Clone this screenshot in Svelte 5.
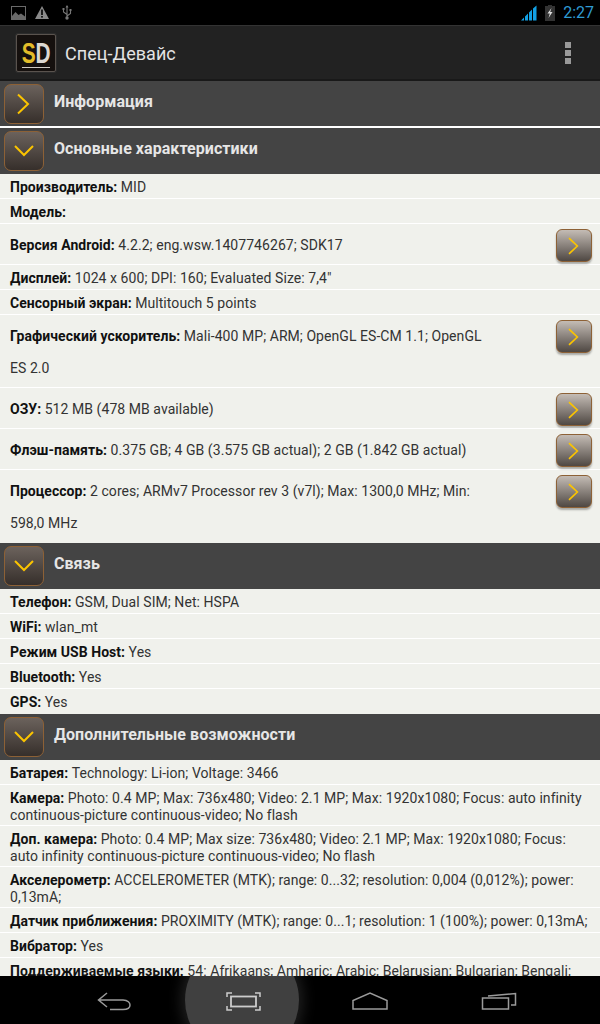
<script>
  const sections = [
    { title: 'Основные характеристики', rows: [
      { k: 'Производитель', v: 'MID' },
      { k: 'Модель', v: '' },
      { k: 'Версия Android', v: '4.2.2; eng.wsw.1407746267; SDK17', btn: true },
      { k: 'Дисплей', v: '1024 x 600; DPI: 160; Evaluated Size: 7,4"' },
      { k: 'Сенсорный экран', v: 'Multitouch 5 points' },
      { k: 'Графический ускоритель', v: 'Mali-400 MP; ARM; OpenGL ES-CM 1.1; OpenGL ES 2.0', btn: true },
      { k: 'ОЗУ', v: '512 MB (478 MB available)', btn: true },
      { k: 'Флэш-память', v: '0.375 GB; 4 GB (3.575 GB actual); 2 GB (1.842 GB actual)', btn: true },
      { k: 'Процессор', v: '2 cores; ARMv7 Processor rev 3 (v7l); Max: 1300,0 MHz; Min: 598,0 MHz', btn: true }
    ]},
    { title: 'Связь', rows: [
      { k: 'Телефон', v: 'GSM, Dual SIM; Net: HSPA' },
      { k: 'WiFi', v: 'wlan_mt' },
      { k: 'Режим USB Host', v: 'Yes' },
      { k: 'Bluetooth', v: 'Yes' },
      { k: 'GPS', v: 'Yes' }
    ]},
    { title: 'Дополнительные возможности', rows: [
      { k: 'Батарея', v: 'Technology: Li-ion; Voltage: 3466' },
      { k: 'Камера', v: 'Photo: 0.4 MP; Max: 736x480; Video: 2.1 MP; Max: 1920x1080; Focus: auto infinity continuous-picture continuous-video; No flash' },
      { k: 'Доп. камера', v: 'Photo: 0.4 MP; Max size: 736x480; Video: 2.1 MP; Max: 1920x1080; Focus: auto infinity continuous-picture continuous-video; No flash' },
      { k: 'Акселерометр', v: 'ACCELEROMETER (MTK); range: 0...32; resolution: 0,004 (0,012%); power: 0,13mA;' },
      { k: 'Датчик приближения', v: 'PROXIMITY (MTK); range: 0...1; resolution: 1 (100%); power: 0,13mA;' },
      { k: 'Вибратор', v: 'Yes' },
      { k: 'Поддерживаемые языки', v: '54: Afrikaans; Amharic; Arabic; Belarusian; Bulgarian; Bengali; Catalan' }
    ]}
  ];
</script>

{#snippet chevron(open)}
  <svg class="chev" viewBox="0 0 24 24" width="24" height="24" aria-hidden="true">
    {#if open}
      <path d="M3 7 L12 16 L21 7" fill="none" stroke="#fbc400" stroke-width="2" />
    {:else}
      <path d="M6 2.5 L16 12 L6 21.5" fill="none" stroke="#fbc400" stroke-width="2" />
    {/if}
  </svg>
{/snippet}

{#snippet header(title, open, short)}
  <div class="header" class:short>
    <div class="hbtn">{@render chevron(open)}</div>
    <span class="htitle">{title}</span>
  </div>
{/snippet}

<div class="screen">
  <div class="status">
    <div class="sleft">
      <svg width="15" height="14" viewBox="0 0 15 14"><rect x="0.5" y="0.5" width="14" height="13" fill="none" stroke="#6a6a6a" /><path d="M1 13 L1 10 L4.5 6 L7.5 9 L10 7.5 L14 10.5 L14 13 Z" fill="#6a6a6a" /></svg>
      <svg width="14" height="13" viewBox="0 0 14 13"><path d="M7 0 L14 13 L0 13 Z" fill="#8a8a8a" /><rect x="6.2" y="3.5" width="1.6" height="5.5" fill="#000" /><rect x="6.2" y="10" width="1.6" height="1.6" fill="#000" /></svg>
      <svg width="10" height="15" viewBox="0 0 10 15"><path d="M5 1 L5 13 M5 9.5 L1.5 7 L1.5 4.5 M5 11 L8.5 8.5 L8.5 5.5" fill="none" stroke="#777" stroke-width="1.1" /><path d="M5 0 L6.5 2.5 H3.5 Z" fill="#777" /><circle cx="5" cy="13" r="1.7" fill="#777" /><rect x="0.5" y="3" width="2" height="2" fill="#777" /><rect x="7.5" y="4" width="2" height="2" fill="#777" /></svg>
    </div>
    <div class="sright">
      <svg width="16" height="16" viewBox="0 0 16 16"><path d="M0 15.5 L3 12.5 L3 15.5 Z M4 11.5 L7 8.5 L7 15.5 L4 15.5 Z M8 7.5 L11 4.5 L11 15.5 L8 15.5 Z M12 3.5 L15.5 0.5 L15.5 15.5 L12 15.5 Z" fill="#12a0e4" /></svg>
      <svg width="10" height="16" viewBox="0 0 10 16"><path d="M3 0 H7 V1 H10 V16 H0 V1 H3 Z" fill="#333" /><path d="M6.5 3 L2.5 8.5 H4.8 L3.5 13 L7.5 7 H5.2 Z" fill="#ddd" /></svg>
      <span class="clock">2:27</span>
    </div>
  </div>

  <div class="actionbar">
    <div class="logo">
      <div class="letters"><span class="s">S</span><span class="d">D</span></div>
      <div class="uline"></div>
    </div>
    <span class="apptitle">Спец-Девайс</span>
    <div class="menu"><i></i><i></i><i></i></div>
  </div>

  <div class="content">
    {@render header('Информация', false, true)}
    <div class="sep"></div>
    {#each sections as sec}
      {@render header(sec.title, true, false)}
      <div class="rows">
        {#each sec.rows as r}
          <div class="row" class:withbtn={r.btn}>
            <div class="text"><b>{r.k}:</b>{r.v ? ' ' + r.v : ''}</div>
            {#if r.btn}
              <div class="rbtn">{@render chevron(false)}</div>
            {/if}
          </div>
        {/each}
      </div>
    {/each}
  </div>

  <div class="nav">
    <div class="glow"></div>
    <svg class="nicon back" width="36" height="22" viewBox="0 0 36 22"><path d="M10 3 L1.5 10 L10 17 M1.5 10 H26 C31 10 33 13 33 15 C33 18 31 19.5 26 19.5 H13" fill="none" stroke="#9a9a9a" stroke-width="1.5" /></svg>
    <svg class="nicon full" width="36" height="20" viewBox="0 0 36 20"><path d="M1 5 V1 H6 M29 1 H34 V5 M34 14 V18 H29 M6 18 H1 V14" fill="none" stroke="#ccc" stroke-width="1.5" /><rect x="5" y="4.5" width="25" height="10" fill="none" stroke="#ccc" stroke-width="1.8" /></svg>
    <svg class="nicon home" width="36" height="20" viewBox="0 0 36 20"><path d="M1 17 V8.5 L18 1 L35 8.5 V17 Z" fill="none" stroke="#9a9a9a" stroke-width="1.5" /></svg>
    <svg class="nicon recent" width="36" height="20" viewBox="0 0 36 20"><rect x="1.5" y="6" width="26" height="11" fill="none" stroke="#9a9a9a" stroke-width="1.5" /><path d="M7 4 L34.5 1.5 V13 H30" fill="none" stroke="#9a9a9a" stroke-width="1.5" /></svg>
  </div>
</div>

<style>
  :global(body) { margin: 0; background: #000; }
  .screen {
    width: 600px; height: 1024px; display: flex; flex-direction: column;
    overflow: hidden; font-family: Roboto, "Liberation Sans", sans-serif;
  }
  .status {
    height: 25px; flex: none; background: #000; display: flex;
    justify-content: space-between; align-items: center; padding: 0 6px 0 11px;
    box-sizing: border-box;
  }
  .sleft { display: flex; gap: 9px; align-items: center; }
  .sleft svg:nth-child(3) { margin-left: 4px; }
  .sright { display: flex; align-items: center; gap: 8px; }
  .clock { color: #2f9bd3; font-size: 16px; margin-left: 0; }
  .actionbar {
    height: 56px; box-sizing: border-box; flex: none; background: #222; border-top: 1px solid #333;
    border-bottom: 2px solid #191919; display: flex; align-items: center; padding: 1px 0 0 16px;
  }
  .logo {
    width: 40px; height: 38px; box-sizing: border-box; border: 1px solid #5a534e; border-radius: 2px;
    background: #15100e; display: flex; flex-direction: column; align-items: center;
    flex: none; padding-top: 7px; box-shadow: 0 0 0 1px #2c2c2c;
  }
  .letters {
    display: flex; font: bold 29px/22px "Liberation Sans", sans-serif;
    height: 22px; transform: scaleX(.72); white-space: nowrap;
  }
  .logo .s { color: #e2bc2a; }
  .logo .d { color: #dcd8d2; }
  .uline { width: 28px; height: 1px; background: #cfcac4; margin-top: 3px; }
  .apptitle { color: #e4e4e4; font-size: 18px; margin-left: 9px; flex: 1; letter-spacing: .05px; }
  .menu { display: flex; flex-direction: column; gap: 2px; margin-right: 29px; }
  .menu i { display: block; width: 6px; height: 6px; background: #999; }
  .content { flex: 1; min-height: 0; overflow: hidden; background: #f0f1ec; }
  .header {
    height: 46px; background: #444; display: flex; align-items: flex-start; padding: 3px 0 0 4px;
    box-sizing: border-box; flex: none;
  }
  .header.short { height: 45px; }
  .hbtn, .rbtn {
    box-sizing: border-box; display: flex; align-items: center; justify-content: center;
    border: 1px solid #8d6136;
  }
  .hbtn {
    width: 40px; height: 40px; border-radius: 7px; flex: none;
    background: linear-gradient(#6b625c, #362f2b);
  }
  .htitle { color: #e6e6e6; font-size: 16px; line-height: 36px; font-weight: 700; margin-left: 10px; letter-spacing: .05px; }
  .sep { height: 2px; background: #fff; }
  .rows { background: #f0f1ec; }
  .row {
    display: flex; align-items: flex-start; justify-content: space-between;
    border-bottom: 1px solid #fff; padding: 5px 8px 2px 10px; min-height: 17px;
    font-size: 14px; line-height: 16.5px; color: #333; letter-spacing: .06px;
  }
  .row:last-child { border-bottom-color: transparent; }
  .row b { color: #111; font-weight: 700; letter-spacing: .04px; }
  .row.withbtn { padding: 5px 8px 3px 10px; min-height: 32px; }
  .row.withbtn .text { line-height: 32px; width: 490px; }
  .rbtn {
    width: 36px; height: 33px; border-radius: 6px; flex: none; margin-bottom: -1px;
    background: linear-gradient(#c4bcb5, #4f4843);
    box-shadow: 0 2px 2px rgba(0,0,0,.3);
  }
  .chev { display: block; }
  .rbtn .chev { width: 20px; height: 20px; }
  .nav {
    height: 48px; flex: none; background: #000; position: relative; overflow: hidden;
  }
  .glow {
    position: absolute; left: 185px; top: -33px; width: 114px; height: 114px; border-radius: 50%;
    background: #404040; box-shadow: 0 0 14px 4px rgba(70,70,70,.45);
  }
  .nicon { position: absolute; }
  .back { left: 97px; top: 14px; }
  .full { left: 225.5px; top: 16px; }
  .home { left: 352px; top: 16px; }
  .recent { left: 481px; top: 16px; }
</style>
